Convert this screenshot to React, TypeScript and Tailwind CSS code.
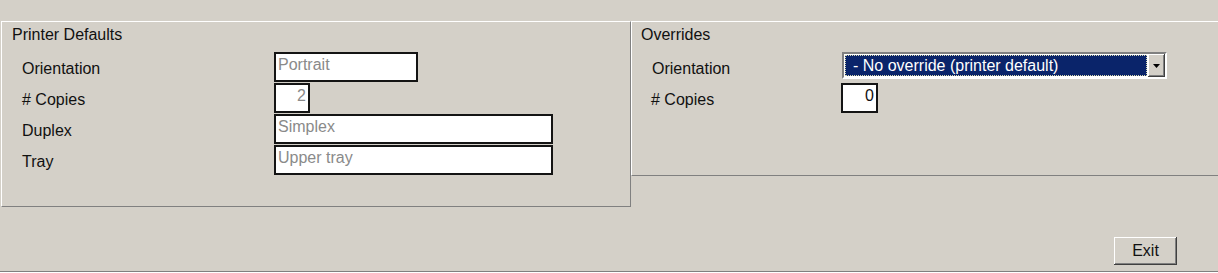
import React from "react";

const sunken = "border-2 border-[#141414] bg-white";

const Label = ({ children }: { children: React.ReactNode }) => (
  <div className="leading-[18px] text-[#111]">{children}</div>
);

const Field = ({ value, width, right }: { value: string; width: string; right?: boolean }) => (
  <div
    className={`${sunken} ${width} h-[30px] px-[2px] pt-[2px] leading-[18px] text-[#8a8a8a] ${right ? "text-right" : "text-left"}`}
  >
    {value}
  </div>
);

export default function App() {
  return (
    <div
      className="flex h-[273px] w-[1218px] flex-col overflow-hidden bg-[#d4d0c8] text-[16px] text-black"
      style={{ fontFamily: '"Liberation Sans", Arial, sans-serif' }}
    >
      <div className="h-[21px] shrink-0" />

      <div className="flex items-start">
        {/* Printer Defaults */}
        <section className="ml-[1px] h-[186px] w-[630px] shrink-0 border-t border-l border-t-white border-l-white border-r border-b border-r-[#808080] border-b-[#808080]">
          <div className="h-[30px] pl-[10px] pt-[4px] leading-[18px] text-[#111]">Printer Defaults</div>
          <div className="flex flex-col gap-[1px]">
            {[
              { label: "Orientation", value: "Portrait", width: "w-[144px]" },
              { label: "# Copies", value: "2", width: "w-[36px]", right: true },
              { label: "Duplex", value: "Simplex", width: "w-[279px]" },
              { label: "Tray", value: "Upper tray", width: "w-[279px]" },
            ].map((r) => (
              <div key={r.label} className="flex h-[30px] items-center">
                <div className="w-[272px] pl-[20px] pt-[4px]">
                  <Label>{r.label}</Label>
                </div>
                <Field value={r.value} width={r.width} right={r.right} />
              </div>
            ))}
          </div>
        </section>

        {/* Overrides */}
        <section className="h-[155px] flex-1 border-t border-l border-t-white border-l-white border-b border-b-[#808080]">
          <div className="h-[30px] pl-[9px] pt-[4px] leading-[18px] text-[#111]">Overrides</div>
          <div className="flex flex-col">
            <div className="flex h-[31px] items-start">
              <div className="w-[210px] pl-[20px] pt-[8px]">
                <Label>Orientation</Label>
              </div>
              <div className="flex h-[27px] w-[325px] border-2 border-t-[#808080] border-l-[#808080] border-b-white border-r-white">
                <div className="flex flex-1 bg-white">
                  <div className="m-[1px] flex flex-1 items-center border border-dotted border-[#d8d8b0] bg-[#0a246a] pl-[7px] leading-[18px] text-white">
                    - No override (printer default)
                  </div>
                </div>
                <div className="flex w-[17px] items-center justify-center bg-[#d4d0c8] shadow-[inset_-1px_-1px_#404040,inset_1px_1px_#fff,inset_-2px_-2px_#808080]">
                  <svg width="7" height="4" viewBox="0 0 7 4">
                    <path d="M0 0h7L3.5 4z" fill="#000" />
                  </svg>
                </div>
              </div>
            </div>
            <div className="flex h-[31px] items-start">
              <div className="w-[209px] pl-[19px] pt-[8px]">
                <Label># Copies</Label>
              </div>
              <Field value="0" width="w-[37px] !text-[#111]" right />
            </div>
          </div>
        </section>
      </div>

      <div className="flex flex-1 items-end justify-end pb-[6px] pr-[41px]">
        <button className="h-[28px] w-[63px] bg-[#d4d0c8] leading-[18px] text-[#111] shadow-[inset_-1px_-1px_#404040,inset_1px_1px_#fff,inset_-2px_-2px_#808080]">
          Exit
        </button>
      </div>
      <div className="h-[2px] shrink-0 border-t border-t-[#808080] border-b border-b-white" />
    </div>
  );
}
